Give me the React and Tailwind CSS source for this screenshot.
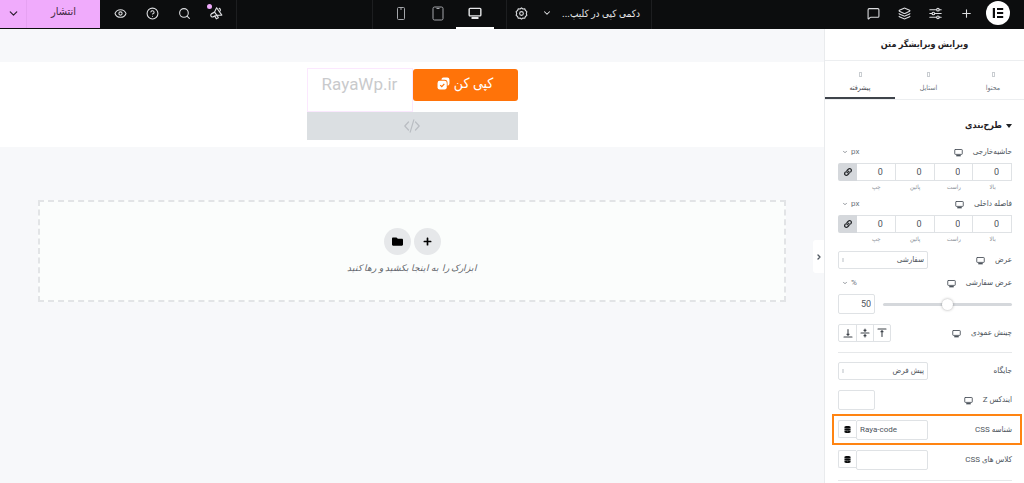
import React from "react";
import {
  ChevronDown,
  ChevronRight,
  CircleHelp,
  Eye,
  Layers,
  MessageSquare,
  Plus,
  Search,
} from "lucide-react";
import { FaDatabase, FaFolder, FaLink, FaPlus } from "react-icons/fa";

const Svg = ({ className = "", children, viewBox = "0 0 24 24", width = 1.8 }) => (
  <svg
    className={className}
    viewBox={viewBox}
    fill="none"
    stroke="currentColor"
    strokeWidth={width}
    strokeLinecap="round"
    strokeLinejoin="round"
    aria-hidden="true"
  >
    {children}
  </svg>
);

const Monitor = ({ className }) => (
  <Svg className={className} width={2.4}>
    <rect x="2" y="4" width="20" height="13" rx="1.5" />
    <path d="M6 20.5h12" strokeWidth="3.6" strokeLinecap="butt" />
  </Svg>
);

const Gear = () => (
  <Svg className="size-[13px]" width={2}>
    <path d="M12 1.500l2.600 2.200 3.400-.4 1.200 3.100 2.700 2.100-1 3.500 1 3.500-2.700 2.100-1.200 3.100-3.400-.4-2.600 2.200-2.600-2.200-3.400.4-1.200-3.100-2.700-2.100 1-3.500-1-3.500 2.700-2.100 1.200-3.100 3.400.4z" />
    <circle cx="12" cy="12" r="3.400" />
  </Svg>
);

const Sliders = () => (
  <Svg className="size-[13px]" width={2}>
    <path d="M1.500 5h12M19 5h3.500M1.500 12h4M11 12h11.500M1.500 19h12M19 19h3.500" />
    <circle cx="16.500" cy="5" r="2.400" />
    <circle cx="8" cy="12" r="2.400" />
    <circle cx="16.500" cy="19" r="2.400" />
  </Svg>
);

const Megaphone = () => (
  <Svg className="size-[14px]" width={2}>
    <path d="M13 3L22 15.500M13 3L9.500 10.500M22 15.500L13.500 16" />
    <path d="M9.500 10.500L4 13.500a3 3 0 0 0 2.600 5.200L13.500 16z" />
    <path d="M18 9.500a3 3 0 0 0-.5-5.500" />
    <path d="M10 17.500l2.500 4.500 3.500-1.800-2-4" />
  </Svg>
);

const CopyCheck = () => (
  <svg className="size-[13px]" viewBox="0 0 24 24" aria-hidden="true">
    <path
      fill="currentColor"
      d="M12 1h7a4 4 0 0 1 4 4v7a4 4 0 0 1-3.500 4v-5.500a5.500 5.500 0 0 0-5.500-5.500H8.200A4 4 0 0 1 12 1z"
    />
    <rect x="1" y="7" width="17" height="16" rx="4" fill="currentColor" />
    <path d="M6 15l2.800 2.800L13.500 12.500" fill="none" stroke="#ff7309" strokeWidth="2.200" />
  </svg>
);

const AlignIcon = ({ kind }) => (
  <Svg className="size-[10px]" viewBox="0 0 20 20" width={2.2}>
    {kind === "top" && <path d="M2 2h16M10 17V6M8 7.500L10 5.500 12 7.500" />}
    {kind === "middle" && <path d="M2 10h16M10 2v4M8 4.500L10 6.500 12 4.500M10 18v-4M8 15.500L10 13.500 12 15.500" />}
    {kind === "bottom" && <path d="M2 18h16M10 3v11M8 12.500L10 14.500 12 12.500" />}
  </Svg>
);

const BarButton = ({ label, className = "", children }) => (
  <button
    type="button"
    aria-label={label}
    className={`relative flex h-[26px] items-center justify-center text-[#dcdde0] ${className}`}
  >
    {children}
  </button>
);

function TopBar() {
  return (
    <header className="grid h-[29px] grid-cols-[1fr_280px_1fr] bg-[#0c0d0e] text-white">
      <div className="flex items-start pr-[11px]">
        <BarButton label="منو" className="w-[31px]">
          <svg className="size-[24px]" viewBox="0 0 24 24" aria-hidden="true">
            <circle cx="12" cy="12" r="12" fill="#fff" />
            <path
              d="M6.800 7h2.200v10H6.800zM11 7h6.200v2H11zM11 11h6.200v2H11zM11 15h6.200v2H11z"
              fill="#0c0d0e"
            />
          </svg>
        </BarButton>
        <BarButton label="افزودن" className="w-[31px]">
          <Plus className="size-[13px]" strokeWidth={2} />
        </BarButton>
        <BarButton label="تنظیمات سایت" className="w-[31px]">
          <Sliders />
        </BarButton>
        <BarButton label="ساختار" className="w-[31px]">
          <Layers className="size-[13px]" strokeWidth={2} />
        </BarButton>
        <BarButton label="یادداشت‌ها" className="w-[31px]">
          <MessageSquare className="size-[13px]" strokeWidth={2} />
        </BarButton>
      </div>

      <div className="flex items-start border-x border-[#1d1e20]">
        <button type="button" className="flex h-[26px] w-[116px] items-center justify-between pr-[11px] pl-[7px] text-[10px] text-[#e6e7e9]">
          <span className="whitespace-nowrap">دکمی کپی در کلیپ...</span>
          <ChevronDown className="size-[10px]" strokeWidth={2.5} />
        </button>
        <BarButton label="تنظیمات برگه" className="w-[28px]">
          <Gear />
        </BarButton>
        <div className="flex h-[29px] flex-1 items-start border-r border-[#1d1e20] pr-[12px]">
          <button type="button" aria-label="دسکتاپ" className="flex h-[29px] w-[38px] justify-center border-b-2 border-white pt-[6px] text-[#e6e7e9]">
            <Monitor className="size-[14px]" />
          </button>
          <BarButton label="تبلت" className="w-[37px]">
            <svg className="h-[15px] w-[12px] text-[#a4a6aa]" viewBox="0 0 12 15" fill="none" stroke="currentColor" aria-hidden="true">
              <rect x="1" y="1" width="10" height="13" rx="1.500" />
              <path d="M4.500 2.500h3" />
            </svg>
          </BarButton>
          <BarButton label="موبایل" className="w-[37px]">
            <svg className="h-[13px] w-[8px] text-[#a4a6aa]" viewBox="0 0 8 13" fill="none" stroke="currentColor" aria-hidden="true">
              <rect x=".5" y=".5" width="7" height="12" rx="1" />
              <path d="M3 2h2" />
            </svg>
          </BarButton>
        </div>
      </div>

      <div className="flex items-start justify-end">
        <div className="flex h-[29px] border-r border-[#1d1e20] pr-[4px] pl-[4px]">
          <BarButton label="تازه‌ها" className="w-[32px]">
            <Megaphone />
            <span className="absolute top-[4px] left-[7px] size-[5px] rounded-full bg-[#f0abfc]" />
          </BarButton>
          <BarButton label="جستجو" className="w-[32px]">
            <Search className="size-[13px]" strokeWidth={2} />
          </BarButton>
          <BarButton label="راهنما" className="w-[32px]">
            <CircleHelp className="size-[13px]" strokeWidth={2} />
          </BarButton>
          <BarButton label="پیش‌نمایش" className="w-[32px]">
            <Eye className="size-[13px]" strokeWidth={2} />
          </BarButton>
        </div>
        <button type="button" className="h-[28px] w-[73px] bg-[#f0abfc] pb-[3px] text-[11px] text-[#3c2a40]">
          انتشار
        </button>
        <button
          type="button"
          aria-label="گزینه‌های انتشار"
          className="flex h-[28px] w-[27px] items-center justify-center border-r border-[#e6a2f2] bg-[#f0abfc] pb-[2px] text-[#2b1d2e]"
        >
          <ChevronDown className="size-[13px]" strokeWidth={2.2} />
        </button>
      </div>
    </header>
  );
}

function Canvas() {
  return (
    <main className="relative min-w-0 flex-1 bg-[#f7f8fa] pt-[33px]">
      <section className="bg-white pt-[6px] pb-[7px]">
        <div className="mx-auto w-[211px]">
          <div className="flex h-[44px]">
            <div className="w-[105px] pt-[1px]">
              <button
                type="button"
                className="flex h-[32px] w-full items-center justify-center gap-[4px] rounded-[3px] bg-[#ff7309] pb-[3px] text-[14px] text-white"
              >
                <span>کپی کن</span>
                <CopyCheck />
              </button>
            </div>
            <div className="flex-1 border border-[#fbe8fe] pt-[3px] text-center text-[17px] leading-[24px] text-[#c9cacc]">
              RayaWp.ir
            </div>
          </div>
          <div className="flex h-[28px] items-center justify-center bg-[#dbdfe2] text-[#b9bdc2]">
            <Svg className="h-[14px] w-[16px]" viewBox="0 0 16 14" width={1.2}>
              <path d="M4.500 3L.8 7l3.700 4M11.500 3l3.700 4-3.700 4M9.800.8L6.200 13.200" />
            </Svg>
          </div>
        </div>
      </section>

      <section className="mx-[38px] mt-[53px] flex h-[102px] flex-col items-center border-2 border-dashed border-[#e2e4e6] bg-[#fbfdfc] pt-[26px]">
        <div className="flex gap-[3px]">
          <button type="button" aria-label="افزودن بخش" className="flex size-[27px] items-center justify-center rounded-full bg-[#e6e8ea] text-black">
            <FaPlus className="size-[9px]" />
          </button>
          <button type="button" aria-label="کتابخانه قالب‌ها" className="flex size-[27px] items-center justify-center rounded-full bg-[#e6e8ea] text-black">
            <FaFolder className="size-[11px]" />
          </button>
        </div>
        <p className="mt-[6px] text-[9px] leading-[14px] text-[#5f646a] italic">ابزارک را به اینجا بکشید و رها کنید</p>
      </section>

      <button
        type="button"
        aria-label="بستن پنل"
        className="absolute top-[211px] right-0 flex h-[33px] w-[11px] items-center justify-center rounded-l-[3px] bg-white text-[#515962]"
      >
        <ChevronRight className="size-[8px]" strokeWidth={4} />
      </button>
    </main>
  );
}

const Unit = ({ children }) => (
  <button type="button" className="mr-auto ml-[4px] flex items-center gap-[3px] text-[8px] text-[#6d747c]">
    <span>{children}</span>
    <ChevronDown className="size-[6px]" strokeWidth={3} />
  </button>
);

const Label = ({ htmlFor, responsive, children }) => {
  const Tag = htmlFor ? "label" : "span";
  return (
    <span className="flex items-center gap-[10px] text-[8px] whitespace-nowrap text-[#4d545c]">
      <Tag htmlFor={htmlFor}>{children}</Tag>
      {responsive && <Monitor className="size-[9px]" />}
    </span>
  );
};

function Dimensions({ title }) {
  return (
    <div role="group" aria-label={title} className="mb-[1px]">
      <div className="flex h-[20px] items-center">
        <Label responsive>{title}</Label>
        <Unit>px</Unit>
      </div>
      <div className="mt-[1px] flex">
        {["بالا", "راست", "پائین", "چپ"].map((side) => (
          <label key={side} className="flex min-w-0 flex-1 flex-col items-center text-[6px] leading-[12px] text-[#858d95]">
            <input
              defaultValue="0"
              className="h-[18px] w-full border border-l-0 border-[#dfe2e5] bg-white pr-[12px] pb-[1px] text-[9px] text-[#4d545c]"
            />
            {side}
          </label>
        ))}
        <button
          type="button"
          aria-label="پیوند مقادیر"
          className="flex h-[18px] w-[19px] items-center justify-center rounded-l-[2px] bg-[#d5d8dc] text-[#1f2124]"
        >
          <FaLink className="size-[8px]" />
        </button>
      </div>
    </div>
  );
}

const SelectRow = ({ id, label, responsive, value }) => (
  <div className="flex h-[18px] items-center justify-between">
    <Label htmlFor={id} responsive={responsive}>
      {label}
    </Label>
    <span className="relative w-[90px]">
      <select
        id={id}
        className="block h-[18px] w-full appearance-none rounded-[2px] border border-[#dfe2e5] bg-white pr-[3px] text-[8px] text-[#4d545c]"
      >
        <option>{value}</option>
      </select>
      <span className="pointer-events-none absolute top-[7px] left-[4px] h-[4px] w-[2px] border border-[#dcdfe2]" />
    </span>
  </div>
);

const TextRow = ({ id, label, value }) => (
  <div className="flex h-[20px] items-center justify-between">
    <Label htmlFor={id}>{label}</Label>
    <span className="flex items-start">
      <input
        id={id}
        dir="ltr"
        defaultValue={value}
        className="h-[20px] w-[72px] rounded-[2px] border border-[#dfe2e5] bg-white px-[3px] pb-[2px] text-[8px] text-[#4d545c]"
      />
      <button
        type="button"
        aria-label="برچسب پویا"
        className="flex h-[18px] w-[18px] items-center justify-center rounded-l-[2px] border border-r-0 border-[#dfe2e5] text-[#0c0d0e]"
      >
        <FaDatabase className="size-[7px]" />
      </button>
    </span>
  </div>
);

const Tab = ({ active, className, children }) => (
  <button
    type="button"
    role="tab"
    aria-selected={Boolean(active)}
    className={`flex flex-col items-center border-b-2 pt-[11px] text-[7px] leading-[10px] ${
      active ? "border-[#3f444b] text-[#3f444b]" : "border-transparent text-[#6d747c]"
    } ${className}`}
  >
    <span className="mb-[6px] h-[5px] w-[3px] border border-[#c9cdd1]" />
    {children}
  </button>
);

function Panel() {
  return (
    <aside className="w-[200px] shrink-0 border-l border-[#e9ebed] bg-white">
      <h1 className="flex h-[32px] items-center justify-center border-b border-[#eceef0] text-[9px] font-bold text-[#1f2124]">
        ویرایش ویرایشگر متن
      </h1>
      <div role="tablist" className="flex h-[39px] border-b border-[#eceef0]">
        <Tab className="w-[62px]">محتوا</Tab>
        <Tab className="flex-1">استایل</Tab>
        <Tab className="w-[70px]" active>
          پیشرفته
        </Tab>
      </div>

      <form className="pr-[12px] pl-[13px]">
        <h2 className="mt-[18px] mb-[8px] flex h-[16px] items-center gap-[4px] text-[9px] font-bold text-[#1f2124]">
          <svg className="h-[4px] w-[6px]" viewBox="0 0 6 4" aria-hidden="true">
            <path d="M0 0h6L3 4z" fill="currentColor" />
          </svg>
          طرح‌بندی
        </h2>

        <Dimensions title="حاشیه‌خارجی" />
        <Dimensions title="فاصله داخلی" />

        <div className="mt-[6px]">
          <SelectRow id="width" label="عرض" responsive value="سفارشی" />
        </div>

        <div className="mt-[4px] flex h-[20px] items-center">
          <Label htmlFor="custom-width" responsive>
            عرض سفارشی
          </Label>
          <Unit>%</Unit>
        </div>
        <div className="mt-[1px] flex h-[20px] items-center gap-[8px]">
          <input
            type="range"
            aria-label="عرض سفارشی"
            defaultValue="50"
            className="h-[12px] min-w-0 flex-1 appearance-none bg-transparent [&::-webkit-slider-runnable-track]:h-[3px] [&::-webkit-slider-runnable-track]:rounded-full [&::-webkit-slider-runnable-track]:bg-[#d5d8dc] [&::-webkit-slider-thumb]:-mt-[4px] [&::-webkit-slider-thumb]:size-[11px] [&::-webkit-slider-thumb]:appearance-none [&::-webkit-slider-thumb]:rounded-full [&::-webkit-slider-thumb]:bg-white [&::-webkit-slider-thumb]:shadow-[0_0_3px_rgba(0,0,0,0.35)]"
          />
          <input
            id="custom-width"
            defaultValue="50"
            className="h-[20px] w-[37px] rounded-[2px] border border-[#dfe2e5] pr-[3px] pb-[1px] text-[9px] text-[#4d545c]"
          />
        </div>

        <div className="mt-[10px] flex h-[18px] items-center justify-between">
          <Label responsive>چینش عمودی</Label>
          <div className="flex divide-x divide-[#dfe2e5] rounded-[2px] border border-[#dfe2e5] text-[#3f444b]">
            {[
              ["top", "بالا"],
              ["middle", "وسط"],
              ["bottom", "پایین"],
            ].map(([kind, name]) => (
              <button key={kind} type="button" aria-label={name} className="flex h-[16px] w-[17px] items-center justify-center">
                <AlignIcon kind={kind} />
              </button>
            ))}
          </div>
        </div>

        <hr className="mt-[10px] mb-[9px] border-[#e6e8ea]" />

        <SelectRow id="position" label="جایگاه" value="پیش فرض" />

        <div className="mt-[10px] flex h-[20px] items-center justify-between">
          <Label htmlFor="z-index" responsive>
            ایندکس Z
          </Label>
          <input id="z-index" className="h-[20px] w-[37px] rounded-[2px] border border-[#dfe2e5] text-[9px]" />
        </div>

        <div className="mt-[4px] -mr-[10px] -ml-[6px] border-2 border-[#ff8412] pt-[4px] pr-[8px] pb-[3px] pl-[4px]">
          <TextRow id="css-id" label="شناسه CSS" value="Raya-code" />
        </div>
        <div className="mt-[5px]">
          <TextRow id="css-classes" label="کلاس های CSS" value="" />
        </div>
        <hr className="mt-[10px] border-[#e6e8ea]" />
      </form>
    </aside>
  );
}

export default function App() {
  return (
    <div
      dir="rtl"
      className="flex min-h-screen flex-col bg-[#f7f8fa] font-[Roboto,'DejaVu_Sans_Condensed','DejaVu_Sans',sans-serif]"
    >
      <TopBar />
      <div className="flex flex-1">
        <Panel />
        <Canvas />
      </div>
    </div>
  );
}
